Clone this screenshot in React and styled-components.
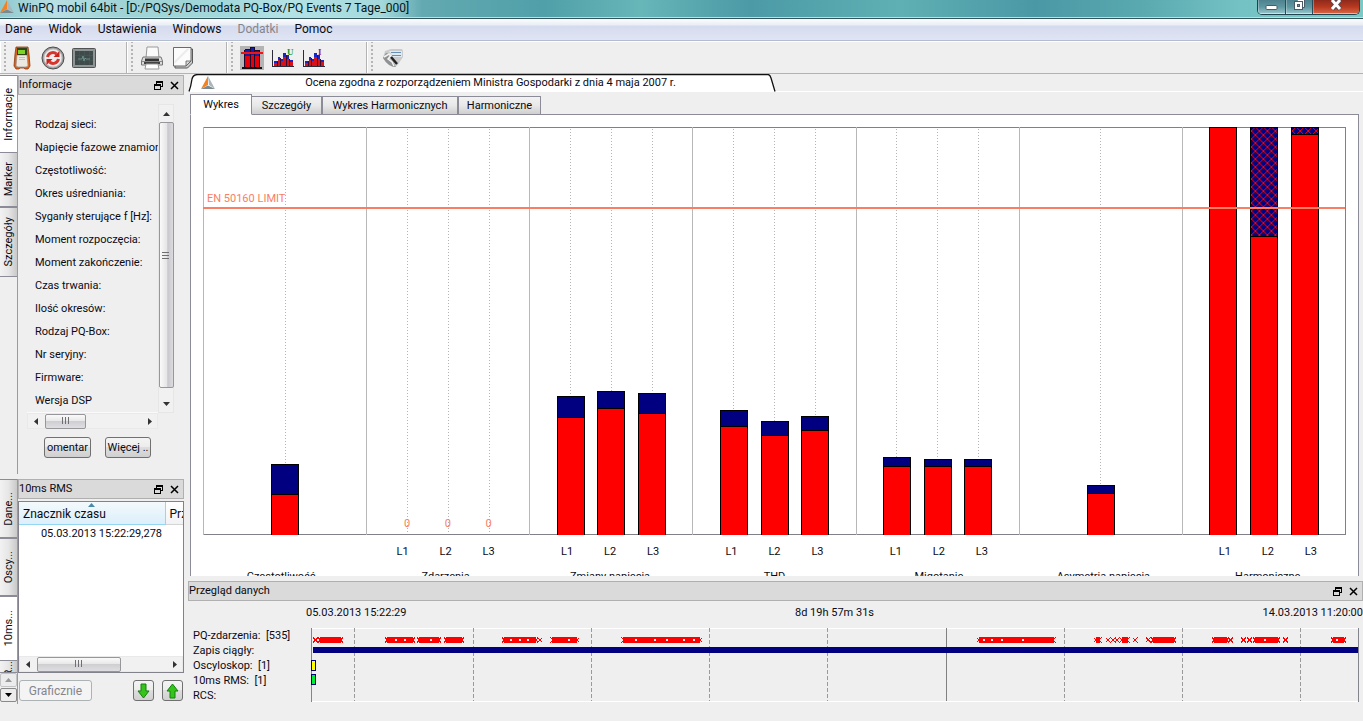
import React from "react";
import styled, { createGlobalStyle, css } from "styled-components";

const GlobalStyle = createGlobalStyle`
  * { box-sizing: border-box; }
  html, body { margin: 0; padding: 0; }
  body {
    background: #efefef;
    color: #0a0a14;
    font-family: Roboto, "Liberation Sans", sans-serif;
    font-size: 11px;
    line-height: 14px;
  }
  button { font: inherit; color: inherit; padding: 0; margin: 0; }
`;

/* ---------- window frame ---------- */

const Window = styled.div`
  display: flex;
  flex-direction: column;
  height: 100vh;
  min-width: 900px;
  overflow: hidden;
`;

const TitleBar = styled.header`
  display: flex;
  align-items: flex-start;
  height: 19px;
  flex: none;
  padding-right: 3px;
  border-bottom: 1px solid #31565e;
  box-shadow: inset 0 -1px 0 #b5e2e6;
  background: linear-gradient(90deg, #8fc9ce 0%, #b9e0e4 4%, #9fd3d6 9%, #a3d9dc 17%, #b4e3e6 21%, #a4d9dc 28%, #63a9b1 31%, #50a0a9 40%, #67b6b8 47%, #4b9aa6 55%, #5fb0b4 66%, #4a98a5 76%, #5aaab0 84%, #75c2c4 91%, #7bc9c7 100%);
`;

const WindowTitle = styled.h1`
  flex: 1;
  margin: 0;
  padding-left: 4px;
  font-size: 12px;
  font-weight: 400;
  line-height: 16px;
  white-space: nowrap;
  color: #04141c;
`;

const WindowControls = styled.div`
  display: flex;
  height: 15px;
  border: 1px solid #1f4450;
  border-top: 0;
  border-radius: 0 0 5px 5px;
  overflow: hidden;
`;

const WindowButton = styled.button`
  display: flex;
  align-items: flex-start;
  justify-content: center;
  width: ${(p) => (p.$close ? 47 : 27)}px;
  height: 14px;
  border: 0;
  border-left: ${(p) => (p.$first ? 0 : 1)}px solid #2a4c58;
  box-shadow: inset 0 -1px 0 rgba(255, 255, 255, 0.5), inset 1px 0 0 rgba(255, 255, 255, 0.3);
  background: ${(p) =>
    p.$close
      ? "linear-gradient(#8d2a1c, #b8391f 50%, #d9694a)"
      : "linear-gradient(#4d818e, #5e97a2 50%, #9cc8cc)"};
`;

/* ---------- menu and toolbar ---------- */

const MenuBar = styled.nav`
  display: flex;
  flex: none;
  height: 22px;
  gap: 16px;
  padding: 3px 5px 0;
  border-bottom: 1px solid #b4bcd2;
  background: linear-gradient(#fbfcfe 0, #e9edf5 6px, #d5dbee 7px, #e0e5f4 100%);
`;

const MenuItem = styled.button`
  height: 14px;
  border: 0;
  background: none;
  font-size: 12px;
  line-height: 14px;
  white-space: nowrap;
  &:disabled { color: #85858c; }
`;

const ToolBar = styled.div`
  display: flex;
  flex: none;
  height: 33px;
  border-top: 1px solid #fff;
  border-bottom: 1px solid #b3b3b3;
`;

const ToolGroup = styled.div`
  display: flex;
  align-items: center;
  gap: ${(p) => p.$gap}px;
  width: ${(p) => p.$width}px;
  padding-left: ${(p) => p.$pad}px;
  border-right: 1px solid #b3b3b3;
  box-shadow: inset 1px 0 0 #fff;
  background: radial-gradient(circle, #b5b5b5 1px, transparent 1px) 3px 2px / 4px 4px repeat-y;
  &:last-child { border-right: 0; flex: 1; }
`;

const ToolButton = styled.button`
  display: flex;
  align-items: center;
  justify-content: center;
  width: 24px;
  height: 24px;
  border: 0;
  background: ${(p) => (p.$active ? "#b4b4b4" : "transparent")};
`;

/* ---------- docks on the left ---------- */

const Body = styled.div`
  display: flex;
  flex: 1;
  min-height: 0;
  gap: 4px;
`;

const Sidebar = styled.aside`
  display: flex;
  flex-direction: column;
  gap: 5px;
  flex: none;
  width: 184px;
  padding-top: 1px;
`;

const DockRow = styled.section`
  display: flex;
  ${(p) => p.$grow && css`flex: 1; min-height: 0;`}
`;

const SideTabs = styled.div`
  display: flex;
  flex-direction: column;
  flex: none;
  width: 18px;
  height: ${(p) => p.$height}px;
  border-right: 1px solid #9a9aa0;
`;

const SideTab = styled.button`
  flex: none;
  width: 17px;
  height: ${(p) => p.$height}px;
  border: 0;
  border-top: 1px solid #8c8c98;
  border-bottom: ${(p) => (p.$active ? 0 : 1)}px solid #8c8c98;
  background: ${(p) => (p.$active ? "#fff" : "linear-gradient(90deg, #f2f2f2, #e6e6e6 50%, #c9c9c9)")};
  overflow: hidden;
  span {
    display: block;
    margin: 0 auto;
    writing-mode: vertical-rl;
    transform: rotate(180deg);
    line-height: 15px;
    white-space: nowrap;
  }
`;

const TabScroller = styled.button`
  display: flex;
  align-items: center;
  justify-content: center;
  flex: none;
  width: 17px;
  height: 14px;
  margin-bottom: 1px;
  border: 1px solid ${(p) => (p.disabled ? "#c4c4c4" : "#8a8a8a")};
  border-radius: 2px;
  background: #ececec;
`;

const Dock = styled.div`
  display: flex;
  flex-direction: column;
  flex: 1;
  min-width: 0;
`;

const DockTitle = styled.div`
  display: flex;
  align-items: center;
  gap: 7px;
  flex: none;
  height: 20px;
  padding: 0 4px 0 0;
  border: 1px solid #b0b0b0;
  background: #dadada;
  h2 {
    flex: 1;
    margin: 0;
    font-size: 11px;
    font-weight: 400;
  }
`;

const IconButton = styled.button`
  display: flex;
  width: 9px;
  height: 9px;
  border: 0;
  background: none;
`;

const InfoBody = styled.div`
  display: flex;
  flex-direction: column;
  padding: 9px 10px 0 9px;
`;

const InfoScroll = styled.div`
  display: flex;
  height: 309px;
`;

const InfoList = styled.ul`
  flex: 1;
  min-width: 0;
  margin: 0;
  padding: 9px 0 0 8px;
  overflow: hidden;
  list-style: none;
  border-bottom: 1px solid #fafafa;
  li {
    height: 23px;
    line-height: 23px;
    white-space: nowrap;
  }
`;

const ScrollBar = styled.div`
  display: flex;
  flex: none;
  align-items: center;
  justify-content: space-between;
  background: #f1f1f1;
  ${(p) =>
    p.$vertical
      ? css`flex-direction: column; width: 16px; border: 1px solid #e6e6e6;`
      : css`height: 16px; padding: 0 4px; border: 1px solid #e9e9e9;`}
`;

const InfoFooter = styled.div`
  padding-right: 16px;
`;

const Arrow = styled.button`
  display: flex;
  align-items: center;
  justify-content: center;
  width: 7px;
  height: ${(p) => (p.$tall ? 17 : 9)}px;
  border: 0;
  background: none;
`;

const Thumb = styled.div`
  display: flex;
  align-items: center;
  justify-content: center;
  border: 1px solid #97979b;
  border-radius: 2px;
  ${(p) =>
    p.$vertical
      ? css`flex: 1; width: 15px; margin-bottom: 7px; background: linear-gradient(90deg, #fafafa, #e6e6e8 50%, #c9c9cd 60%, #dcdce0);`
      : css`width: ${p.$width}px; height: 15px; margin-right: auto; margin-left: 6px; background: linear-gradient(#fafafa, #e8e8ea 45%, #cfcfd2 50%, #dfdfe3);`}
`;

const InfoButtons = styled.div`
  display: flex;
  gap: 14px;
  padding: 8px 0 0 17px;
`;

const PushButton = styled.button`
  display: flex;
  align-items: center;
  justify-content: center;
  width: ${(p) => p.$width}px;
  height: 21px;
  border: 1px solid #707070;
  border-radius: 3px;
  overflow: hidden;
  white-space: nowrap;
  background: linear-gradient(#f4f4f4, #ececec 48%, #dddddd 50%, #d0d0d0);
  &:disabled {
    color: #85858a;
    border-color: #adb2b5;
    background: #f4f4f4;
    font-size: 12px;
  }
`;

const TableFrame = styled.div`
  display: flex;
  flex-direction: column;
  flex: none;
  height: 172px;
  margin-top: 2px;
  border: 1px solid #82828c;
  background: #fff;
  overflow: hidden;
`;

const TableView = styled.div`
  flex: 1;
  overflow: hidden;
`;

const RecordTable = styled.table`
  width: 240px;
  table-layout: fixed;
  border-collapse: collapse;
  th {
    width: 146px;
    height: 22px;
    padding: 2px 4px 0;
    border-right: 1px solid #95d6f2;
    border-bottom: 1px solid #95d6f2;
    background: linear-gradient(#f4fafd, #e8f5fb 45%, #dceffa);
    font-size: 12px;
    font-weight: 400;
    text-align: left;
    position: relative;
  }
  th + th {
    width: 94px;
    border-color: #d5d5d5;
    background: linear-gradient(#fff, #f1f2f4);
  }
  th svg { position: absolute; top: 1px; left: 69px; }
  td {
    height: 20px;
    padding: 0 3px 0 0;
    text-align: right;
    white-space: nowrap;
  }
`;

const ActionRow = styled.div`
  display: flex;
  align-items: center;
  padding: 7px 1px 0 1px;
  > :first-child { margin-right: auto; }
  > :last-child { margin-left: 8px; }
`;

/* ---------- report area ---------- */

const Main = styled.main`
  display: flex;
  flex-direction: column;
  flex: 1;
  min-width: 0;
`;

const ReportHeader = styled.div`
  display: flex;
  align-items: center;
  flex: none;
  height: 17px;
  width: 588px;
  position: relative;
  h2 {
    flex: 1;
    margin: 0;
    padding-right: 10px;
    text-align: center;
    font-size: 11px;
    font-weight: 400;
    line-height: 18px;
    position: relative;
  }
`;

const HeaderShape = styled.svg`
  position: absolute;
  inset: 0;
`;

const LogoSlot = styled.span`
  display: flex;
  position: relative;
  padding-left: 13px;
`;

const HeaderLine = styled.div`
  flex: none;
  height: 3px;
  border-top: 1px solid #fff;
`;

const ReportTabs = styled.div`
  display: flex;
  align-items: flex-end;
  flex: none;
  height: 21px;
  padding-left: 2px;
  position: relative;
  margin-bottom: -1px;
`;

const ReportTab = styled.button`
  width: ${(p) => p.$width}px;
  height: ${(p) => (p.$active ? 21 : 19)}px;
  border: 1px solid #8c8c98;
  border-left-width: ${(p) => (p.$joined ? 0 : 1)}px;
  border-bottom-color: ${(p) => (p.$active ? "#fff" : "#8c8c98")};
  background: ${(p) => (p.$active ? "#fff" : "linear-gradient(#f2f2f2, #e8e8e8 50%, #cfcfcf)")};
  white-space: nowrap;
`;

const ChartPanel = styled.section`
  flex: 1;
  min-height: 0;
  margin: 0 4px 0 2px;
  padding: 12px 8px 0;
  border: 1px solid #8c8c98;
  border-bottom: 0;
  background: #fff;
  overflow: hidden;
`;

const Plot = styled.svg`
  display: block;
  width: calc(100% - 9px);
  height: 409px;
  margin: 0 5px 0 4px;
  overflow: visible;
  text { font-size: 11px; fill: #f97e64; }
`;

const LabelRow = styled.div`
  display: grid;
  grid-template-columns: repeat(7, 1fr);
  padding-top: ${(p) => p.$top}px;
  text-align: center;
`;

const PhaseLabels = styled.div`
  display: grid;
  grid-template-columns: repeat(3, 43px);
  justify-content: center;
`;

/* ---------- recording overview ---------- */

const Overview = styled.section`
  flex: none;
  height: 140px;
  margin-top: 5px;
`;

const TimeRow = styled.div`
  display: flex;
  justify-content: space-between;
  padding: 5px 0 0 118px;
  white-space: nowrap;
`;

const Lanes = styled.div`
  display: flex;
  padding: 8px 5px 0 0;
`;

const LaneNames = styled.ul`
  flex: none;
  width: 123px;
  margin: 0;
  padding: 0 0 0 5px;
  list-style: none;
  white-space: pre;
  li { height: 15px; line-height: 15px; }
`;

const Track = styled.svg`
  display: block;
  flex: 1;
  min-width: 0;
  height: 74px;
  overflow: visible;
`;

/* ---------- small drawings ---------- */

const TriangleLogo = ({ size = 14 }) => (
  <svg width={size} height={size} viewBox="0 0 14 14" aria-hidden="true">
    <path d="M7 0L7 9L0 13Z" fill="#f58220" />
    <path d="M7 0L14 13L8 9Z" fill="#a9b6ba" />
    <path d="M0 13L7 9.600L14 13Z" fill="#7b8a90" />
  </svg>
);

const FloatIcon = () => (
  <svg width="9" height="9" viewBox="0 0 9 9" shapeRendering="crispEdges" aria-hidden="true">
    <path d="M2 0h7v6h-2v3H0V3h2zM3 2v1h4v2h1V2zM1 5v3h5V5z" fillRule="evenodd" fill="#000" />
  </svg>
);

const CloseIcon = () => (
  <svg width="9" height="9" viewBox="0 0 9 9" aria-hidden="true">
    <path d="M1 1L8 8M8 1L1 8" stroke="#000" strokeWidth="1.500" />
  </svg>
);

const arrowPaths = {
  up: "M0 4L3.500 0L7 4Z",
  down: "M0 0L7 0L3.500 4Z",
  left: "M4 0L4 7L0 3.500Z",
  right: "M0 0L4 3.500L0 7Z",
};

const Triangle = ({ dir, color = "#333" }) => {
  const flat = dir === "up" || dir === "down";
  return (
    <svg width={flat ? 7 : 4} height={flat ? 4 : 7} aria-hidden="true">
      <path d={arrowPaths[dir]} fill={color} />
    </svg>
  );
};

const Grip = ({ vertical }) => (
  <svg width="8" height="8" shapeRendering="crispEdges" aria-hidden="true">
    <path d={vertical ? "M0 1.500H7M0 4.500H7M0 7.500H7" : "M.5 0V7M3.500 0V7M6.500 0V7"} stroke="#6f6f73" />
  </svg>
);

const DeviceIcon = () => (
  <svg width="18" height="24" viewBox="0 0 18 24" aria-hidden="true">
    <path d="M3 1h12l1 7 1 12-2 3h-3l-1-1H7l-1 1H3l-2-3L2 8z" fill="#d9631c" stroke="#8f3a0c" strokeWidth=".8" />
    <path d="M4 9h10l1 11-2 1H5l-2-1z" fill="#ece9e2" stroke="#9b9088" strokeWidth=".7" />
    <rect x="4" y="2" width="10" height="7" fill="#33431b" />
    <rect x="5" y="4" width="7" height="4" fill="#7ed32a" />
    <path d="M6 11.500h6M6 13.500h6" stroke="#c5c0b8" />
  </svg>
);

const RefreshIcon = () => (
  <svg width="24" height="24" viewBox="0 0 24 24" aria-hidden="true">
    <circle cx="12" cy="12" r="11" fill="#9a9a9a" stroke="#4d4d4d" />
    <circle cx="12" cy="12" r="9" fill="#ececec" stroke="#c5c5c5" />
    <path d="M6.500 11a5.500 5.500 0 0 1 9-3" fill="none" stroke="#d8342c" strokeWidth="3" />
    <path d="M17.500 13a5.500 5.500 0 0 1-9 3" fill="none" stroke="#d8342c" strokeWidth="3" />
    <path d="M18.500 5v6h-6zM5.500 19v-6h6z" fill="#c9221d" />
  </svg>
);

const ScopeIcon = () => (
  <svg width="24" height="22" viewBox="0 0 24 22" aria-hidden="true">
    <rect x=".5" y="1.500" width="23" height="19" rx="1" fill="#8f9494" stroke="#4e5252" />
    <rect x="3" y="4" width="18" height="14" fill="#3f4a4a" />
    <path d="M3 8.500h18M3 13.500h18M7.500 4v14M12.500 4v14M17.500 4v14" stroke="#4d5a5a" strokeWidth=".5" />
    <path d="M6 12h4l1-3 1 5 1-3 1 1h4" fill="none" stroke="#6f9f98" strokeWidth=".8" />
  </svg>
);

const PrinterIcon = () => (
  <svg width="22" height="24" viewBox="0 0 22 24" aria-hidden="true">
    <path d="M6 1h11l1 11H5z" fill="#fbfbfb" stroke="#999" />
    <path d="M2 11h18l1.500 4v4H.5v-4z" fill="#dcdcdc" stroke="#777" />
    <path d="M4 12.500h14v3H4z" fill="#333" />
    <path d="M1 15.500h20" stroke="#888" />
    <path d="M3 17h16" stroke="#111" strokeWidth="1.500" />
    <path d="M5 18h12l1 5H4z" fill="#fff" stroke="#999" />
  </svg>
);

const PageIcon = () => (
  <svg width="22" height="23" viewBox="0 0 22 23" aria-hidden="true">
    <path d="M3 3h17.500v14l-5 5H3z" fill="#c9c9c9" stroke="#5a5a5a" />
    <path d="M1.500 1.500h17.500V15l-5 5H1.500z" fill="#fcfcfc" stroke="#5a5a5a" strokeWidth=".9" />
    <path d="M2.500 15L15 2.500h3L2.500 18z" fill="#ececec" />
    <path d="M19 15h-5v5z" fill="#d9d9d9" stroke="#5a5a5a" strokeWidth=".8" />
  </svg>
);

const BarsIcon = () => (
  <svg width="23" height="22" viewBox="0 0 23 22" shapeRendering="crispEdges" aria-hidden="true">
    <path d="M4 2h5v18H4zM9 0h5v20H9zM14 3h5v17h-5z" fill="#101fb0" />
    <path d="M4 9h5v11H4zM9 8h5v12H9zM14 9h5v11h-5z" fill="#e80008" />
    <path d="M3.500 2.500V20M9.500 1v19M13.500 1v19M18.500 3v17M4 2.500h5M9 .5h5M14 3.500h5" fill="none" stroke="#1a0a30" />
    <path d="M0 6h22" stroke="#f01414" strokeWidth="2" />
    <path d="M1 20.500h20" stroke="#111" strokeWidth="2" />
  </svg>
);

const SpectrumIcon = ({ letter, color }) => (
  <svg width="22" height="22" viewBox="0 0 22 22" shapeRendering="crispEdges" aria-hidden="true">
    <path d="M2 14h3v3H2zM6 10h2v4H6zM9 12h2v3H9zM11 6h3v5h-3zM15 8h2v5h-2zM18 13h3v3h-3z" fill="#1726c8" />
    <path d="M2 16h3v3H2zM6 13h2v6H6zM9 14h2v5H9zM11 10h3v9h-3zM15 12h2v7h-2zM18 15h3v4h-3z" fill="#d81018" />
    <path d="M5.500 14v5M8.500 11v8M14.500 8v11M17.500 12v7" stroke="#3a0a30" />
    <path d="M.5 3v17M0 19.500h22" stroke="#2a2a38" />
    <text x="15" y="8" fontFamily="Liberation Serif" fontWeight="700" fontSize="9" fill={color}>{letter}</text>
  </svg>
);

const ToolsIcon = () => (
  <svg width="22" height="20" viewBox="0 0 22 20" aria-hidden="true">
    <path d="M3 3L9 1H20L21 3V9L17 15Q15 19 11 19L1 10z" fill="#c9cbcc" />
    <path d="M7 3h13v6h-9z" fill="#dfe9f0" />
    <path d="M9 4.500h10M10 7.500h9" stroke="#668fb5" />
    <path d="M1 10l3-5 4 1-2 4 5 4 3 5Q6 19 1 10z" fill="#8f9192" />
    <path d="M2 9l5-3 2 2-3 3 4 3 2 4" fill="none" stroke="#f3f3f3" strokeWidth="1.500" />
    <path d="M9 9l6 7" stroke="#222" strokeWidth="2.500" />
  </svg>
);

const GreenArrow = ({ up }) => (
  <svg width="13" height="16" viewBox="0 0 13 16" aria-hidden="true">
    <path
      d={up ? "M6.500 1L12 8H9V15H4V8H1Z" : "M6.500 15L12 8H9V1H4V8H1Z"}
      fill="#35c31c"
      stroke="#15810d"
    />
  </svg>
);

/* ---------- data ---------- */

const infoLabels = [
  "Rodzaj sieci:",
  "Napięcie fazowe znamionowe:",
  "Częstotliwość:",
  "Okres uśredniania:",
  "Syganły sterujące f [Hz]:",
  "Moment rozpoczęcia:",
  "Moment zakończenie:",
  "Czas trwania:",
  "Ilość okresów:",
  "Rodzaj PQ-Box:",
  "Nr seryjny:",
  "Firmware:",
  "Wersja DSP",
];

// Heights in chart units: [maximum, 95 % value, over-limit]
const groups = [
  { name: "Częstotliwość", bars: [[70, 40]] },
  { name: "Zdarzenia", bars: [[0, 0], [0, 0], [0, 0]] },
  { name: "Zmiany napięcia", bars: [[138, 117], [143, 126], [141, 121]] },
  { name: "THD", bars: [[124, 108], [113, 99], [118, 104]] },
  { name: "Migotanie", bars: [[77, 68], [75, 68], [75, 68]] },
  { name: "Asymetria napięcia", bars: [[49, 41]] },
  { name: "Harmoniczne", bars: [[407, 407], [407, 298, true], [407, 400, true]] },
];

const FULL = 407;
const pct = (v) => `${v * 100}%`;

const Chart = () => (
  <Plot shapeRendering="crispEdges" role="img" aria-label="EN 50160">
    <defs>
      <pattern id="hatch" width="8" height="8" patternUnits="userSpaceOnUse">
        <rect width="8" height="8" fill="#000080" />
        <path d="M0 0L8 8M8 0L0 8" stroke="#f00" strokeWidth="1.300" />
        <path d="M3 3h2v2H3zM0 0h1v1H0zM7 0h1v1H7zM0 7h1v1H0zM7 7h1v1H7z" fill="#f00" />
      </pattern>
    </defs>
    <line x1="0" x2="100%" y1=".5" y2=".5" stroke="#808088" />
    <line x1="0" x2="100%" y1="407.500" y2="407.500" stroke="#808088" />
    <line x1="100%" x2="100%" y1="0" y2="408" stroke="#808088" />
    {groups.map((g, i) => (
      <React.Fragment key={g.name}>
        <svg x={pct(i / 7)} y="0" width="1" height="409" overflow="visible">
          <line x1=".5" x2=".5" y1="0" y2="408" stroke="#b8b8b8" />
        </svg>
        {g.bars.map(([max, main, over], k) => {
          const pos = (i + (g.bars.length === 1 ? 2 : k + 1) / 4) / 7;
          return (
            <svg key={k} x={pct(pos)} y="0" width="1" height="409" overflow="visible">
              <line x1=".5" x2=".5" y1="2" y2={FULL} stroke="#b4b4b4" strokeDasharray="1 2" />
              {max === 0 ? (
                <text x="-3" y="400">0</text>
              ) : (
                <>
                  {max > main && (
                    <rect
                      x="-13"
                      y={FULL - max + 0.5}
                      width="27"
                      height={max - main}
                      fill={over ? "url(#hatch)" : "#000080"}
                      stroke="#000"
                    />
                  )}
                  <rect x="-13" y={FULL - main + 0.5} width="27" height={main} fill="#f00" />
                  <path d={`M-13 408V${FULL - main + 0.5}H14V408`} fill="none" stroke="#000" />
                </>
              )}
            </svg>
          );
        })}
      </React.Fragment>
    ))}
    <line x1="0" x2="100%" y1="81" y2="81" stroke="#f97e64" strokeWidth="2" />
    <text x="4" y="75">EN 50160 LIMIT</text>
  </Plot>
);

const SPAN = 1046;
const eventRuns = [
  [6, 31], [73, 103], [105, 129], [132, 152], [190, 226], [238, 267], [309, 390],
  [664, 743], [781, 789], [807, 817], [838, 863], [899, 916], [940, 967], [1018, 1033],
];
const eventSingles = [4, 228, 796, 801, 805, 823, 836, 918, 931, 937, 973];
const eventGaps = [84, 93, 119, 199, 208, 216, 257, 324, 343, 355, 372, 382, 671, 679, 689, 710, 952, 1024];
const dayLines = [42, 161, 279, 397, 515, 634, 752, 870, 988];

const Cross = ({ at }) => (
  <svg x={pct(at / SPAN)} y="9" width="6" height="6" overflow="visible">
    <path d="M-2 .5L3 5.500M3 .5L-2 5.500" stroke="#f00" strokeWidth="1" />
  </svg>
);

const Timeline = () => (
  <Track shapeRendering="crispEdges" role="img" aria-label="Przegląd danych">
    <line x1="0" x2="100%" y1=".5" y2=".5" stroke="#fff" />
    <line x1="0" x2="100%" y1="73.500" y2="73.500" stroke="#fff" />
    {dayLines.map((d) => (
      <svg key={d} x={pct(d / SPAN)} y="0" width="1" height="74" overflow="visible">
        <line
          x1="1"
          x2="1"
          y1="0"
          y2="73"
          stroke={d === 634 ? "#808080" : "#9a9a9a"}
          strokeDasharray={d === 634 ? undefined : "4 2"}
        />
      </svg>
    ))}
    {eventRuns.map(([a, b]) => (
      <React.Fragment key={a}>
        <rect x={pct((a + 3) / SPAN)} y="9" width={pct((b - a - 4) / SPAN)} height="6" fill="#f00" />
        <Cross at={a + 3} />
        <Cross at={b - 2} />
      </React.Fragment>
    ))}
    {eventGaps.map((g) => (
      <rect key={g} x={pct(g / SPAN)} y="11" width="2" height="2" fill="#efefef" />
    ))}
    {eventSingles.map((s) => <Cross key={s} at={s} />)}
    <line x1=".5" x2=".5" y1="0" y2="74" stroke="#84848c" />
    <line x1="100%" x2="100%" y1="0" y2="74" stroke="#84848c" />
    <line x1="2" x2="100%" y1="22" y2="22" stroke="#000080" strokeWidth="6" />
    <rect x=".5" y="32.500" width="4" height="10" fill="#ff0" stroke="#000080" />
    <rect x=".5" y="46.500" width="4" height="10" fill="#0e3" stroke="#000080" />
  </Track>
);

const DockHeader = ({ title }) => (
  <DockTitle>
    <h2>{title}</h2>
    <IconButton aria-label="Odepnij"><FloatIcon /></IconButton>
    <IconButton aria-label="Zamknij"><CloseIcon /></IconButton>
  </DockTitle>
);

const HScroll = ({ thumb }) => (
  <ScrollBar>
    <Arrow aria-label="W lewo"><Triangle dir="left" /></Arrow>
    <Thumb $width={thumb}><Grip /></Thumb>
    <Arrow aria-label="W prawo"><Triangle dir="right" /></Arrow>
  </ScrollBar>
);

export default function App() {
  return (
    <Window>
      <GlobalStyle />
      <TitleBar>
        <TriangleLogo />
        <WindowTitle>WinPQ mobil 64bit - [D:/PQSys/Demodata PQ-Box/PQ Events 7 Tage_000]</WindowTitle>
        <WindowControls>
          <WindowButton $first aria-label="Minimalizuj">
            <svg width="13" height="12"><rect x="1" y="5.500" width="11" height="4" rx="1" fill="#fff" stroke="#4a5a66" /></svg>
          </WindowButton>
          <WindowButton aria-label="Przywróć">
            <svg width="13" height="12">
              <path d="M4.500 0V-1H11.500V7.500H9.500" fill="#fff" stroke="#4a5a66" />
              <rect x="1.500" y="1.500" width="8" height="8" fill="#fff" stroke="#4a5a66" />
              <rect x="4.500" y="4.500" width="2" height="2" fill="#6e9ba4" stroke="#4a5a66" />
            </svg>
          </WindowButton>
          <WindowButton $close aria-label="Zamknij">
            <svg width="14" height="12">
              <path d="M3 0L11 9M11 0L3 9" stroke="#5a4a50" strokeWidth="5" />
              <path d="M3 0L11 9M11 0L3 9" stroke="#fff" strokeWidth="3" />
            </svg>
          </WindowButton>
        </WindowControls>
      </TitleBar>

      <MenuBar>
        <MenuItem>Dane</MenuItem>
        <MenuItem>Widok</MenuItem>
        <MenuItem>Ustawienia</MenuItem>
        <MenuItem>Windows</MenuItem>
        <MenuItem disabled>Dodatki</MenuItem>
        <MenuItem>Pomoc</MenuItem>
      </MenuBar>

      <ToolBar>
        <ToolGroup $width={127} $pad={10} $gap={7}>
          <ToolButton aria-label="Urządzenie"><DeviceIcon /></ToolButton>
          <ToolButton aria-label="Odśwież"><RefreshIcon /></ToolButton>
          <ToolButton aria-label="Oscyloskop"><ScopeIcon /></ToolButton>
        </ToolGroup>
        <ToolGroup $width={100} $pad={13} $gap={7}>
          <ToolButton aria-label="Drukuj"><PrinterIcon /></ToolButton>
          <ToolButton aria-label="Strona"><PageIcon /></ToolButton>
        </ToolGroup>
        <ToolGroup $width={140} $pad={13} $gap={7}>
          <ToolButton $active aria-label="EN 50160"><BarsIcon /></ToolButton>
          <ToolButton aria-label="Harmoniczne U"><SpectrumIcon letter="U" color="#149a28" /></ToolButton>
          <ToolButton aria-label="Harmoniczne I"><SpectrumIcon letter="I" color="#96149a" /></ToolButton>
        </ToolGroup>
        <ToolGroup $pad={14} $gap={7}>
          <ToolButton aria-label="Opcje"><ToolsIcon /></ToolButton>
        </ToolGroup>
      </ToolBar>

      <Body>
        <Sidebar>
          <DockRow>
            <SideTabs $height={399}>
              <SideTab $active $height={77}><span>Informacje</span></SideTab>
              <SideTab $height={55}><span>Marker</span></SideTab>
              <SideTab $height={70}><span>Szczegóły</span></SideTab>
            </SideTabs>
            <Dock>
              <DockHeader title="Informacje" />
              <InfoBody>
                <InfoScroll>
                  <InfoList>
                    {infoLabels.map((l) => <li key={l}>{l}</li>)}
                  </InfoList>
                  <ScrollBar $vertical>
                    <Arrow $tall aria-label="W górę"><Triangle dir="up" /></Arrow>
                    <Thumb $vertical><Grip vertical /></Thumb>
                    <Arrow $tall aria-label="W dół"><Triangle dir="down" /></Arrow>
                  </ScrollBar>
                </InfoScroll>
                <InfoFooter>
                  <HScroll thumb={41} />
                </InfoFooter>
                <InfoButtons>
                  <PushButton $width={47} aria-label="Komentarz">omentar</PushButton>
                  <PushButton $width={46} aria-label="Więcej">Więcej ..</PushButton>
                </InfoButtons>
              </InfoBody>
            </Dock>
          </DockRow>

          <DockRow $grow>
            <SideTabs $height={225}>
              <SideTab $height={59}><span>Dane...</span></SideTab>
              <SideTab $height={58}><span>Oscy...</span></SideTab>
              <SideTab $active $height={64}><span>10ms...</span></SideTab>
              <SideTab $height={13}><span>R...</span></SideTab>
              <TabScroller disabled aria-label="Poprzednie"><Triangle dir="up" color="#999" /></TabScroller>
              <TabScroller aria-label="Następne"><Triangle dir="down" color="#000" /></TabScroller>
            </SideTabs>
            <Dock>
              <DockHeader title="10ms RMS" />
              <TableFrame>
                <TableView>
                  <RecordTable>
                    <thead>
                      <tr>
                        <th>Znacznik czasu<Triangle dir="up" color="#4a8aa8" /></th>
                        <th>Przyczyna</th>
                      </tr>
                    </thead>
                    <tbody>
                      <tr><td>05.03.2013 15:22:29,278</td><td /></tr>
                    </tbody>
                  </RecordTable>
                </TableView>
                <HScroll thumb={84} />
              </TableFrame>
              <ActionRow>
                <PushButton $width={73} disabled>Graficznie</PushButton>
                <PushButton $width={21} aria-label="W dół"><GreenArrow /></PushButton>
                <PushButton $width={21} aria-label="W górę"><GreenArrow up /></PushButton>
              </ActionRow>
            </Dock>
          </DockRow>
        </Sidebar>

        <Main>
          <ReportHeader>
            <HeaderShape width="588" height="18" aria-hidden="true">
              <path d="M1 17.500Q3 12 4 5Q5 .5 10 .5H580Q582 .5 583 4L587 17.500Z" fill="#fff" />
              <path d="M1 17.500Q3 12 4 5Q5 .5 10 .5H580Q582 .5 583 4L587 17.500" fill="none" stroke="#111" strokeWidth="1.300" />
            </HeaderShape>
            <LogoSlot><TriangleLogo /></LogoSlot>
            <h2>Ocena zgodna z rozporządzeniem Ministra Gospodarki z dnia 4 maja 2007 r.</h2>
          </ReportHeader>
          <HeaderLine />
          <ReportTabs>
            <ReportTab $active $width={62}>Wykres</ReportTab>
            <ReportTab $joined $width={70}>Szczegóły</ReportTab>
            <ReportTab $width={136}>Wykres Harmonicznych</ReportTab>
            <ReportTab $width={83}>Harmoniczne</ReportTab>
          </ReportTabs>
          <ChartPanel>
            <Chart />
            <LabelRow $top={9}>
              {groups.map((g) => (
                <PhaseLabels key={g.name}>
                  {g.bars.length === 3 && ["L1", "L2", "L3"].map((l) => <span key={l}>{l}</span>)}
                </PhaseLabels>
              ))}
            </LabelRow>
            <LabelRow $top={11}>
              {groups.map((g) => <span key={g.name}>{g.name}</span>)}
            </LabelRow>
          </ChartPanel>
          <Overview>
            <DockHeader title="Przegląd danych" />
            <TimeRow>
              <time>05.03.2013 15:22:29</time>
              <span>8d 19h 57m 31s</span>
              <time>14.03.2013 11:20:00</time>
            </TimeRow>
            <Lanes>
              <LaneNames>
                <li>PQ-zdarzenia:  [535]</li>
                <li>Zapis ciągły:</li>
                <li>Oscyloskop:  [1]</li>
                <li>10ms RMS:  [1]</li>
                <li>RCS:</li>
              </LaneNames>
              <Timeline />
            </Lanes>
          </Overview>
        </Main>
      </Body>
    </Window>
  );
}
